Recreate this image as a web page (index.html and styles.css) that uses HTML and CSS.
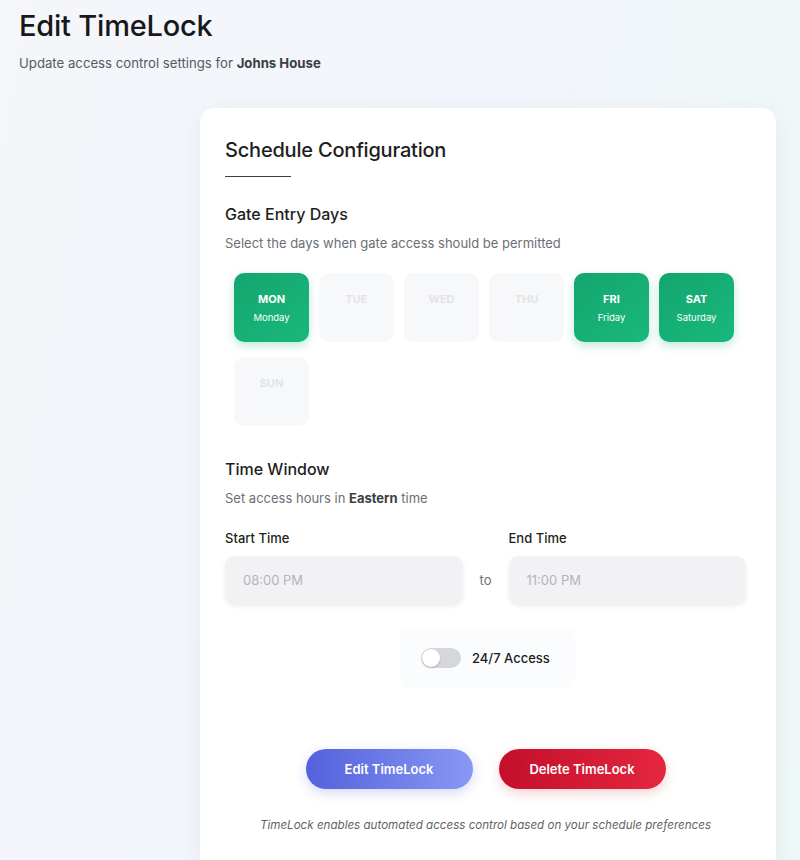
FILE: index.html
```html
<!DOCTYPE html>
<html lang="en">
<head>
<meta charset="utf-8">
<title>Edit TimeLock</title>
<link rel="stylesheet" href="styles.css">
</head>
<body>
<div class="page">
  <header class="page-head">
    <h1 class="title">Edit TimeLock</h1>
    <p class="subtitle">Update access control settings for <strong>Johns House</strong></p>
  </header>
  <main class="layout">
    <section class="card">
      <h2 class="card-title">Schedule Configuration</h2>
      <div class="rule"></div>

      <h3 class="section-title">Gate Entry Days</h3>
      <p class="section-desc">Select the days when gate access should be permitted</p>
      <div class="days">
        <div class="day on"><span class="abbr">MON</span><span class="full">Monday</span></div>
        <div class="day"><span class="abbr">TUE</span><span class="full">Tuesday</span></div>
        <div class="day"><span class="abbr">WED</span><span class="full">Wednesday</span></div>
        <div class="day"><span class="abbr">THU</span><span class="full">Thursday</span></div>
        <div class="day on"><span class="abbr">FRI</span><span class="full">Friday</span></div>
        <div class="day on"><span class="abbr">SAT</span><span class="full">Saturday</span></div>
        <div class="day"><span class="abbr">SUN</span><span class="full">Sunday</span></div>
      </div>

      <h3 class="section-title tw">Time Window</h3>
      <p class="section-desc">Set access hours in <strong>Eastern</strong> time</p>
      <div class="times">
        <div class="field">
          <label class="label">Start Time</label>
          <div class="input">08:00 PM</div>
        </div>
        <span class="to">to</span>
        <div class="field">
          <label class="label">End Time</label>
          <div class="input">11:00 PM</div>
        </div>
      </div>

      <div class="toggle-row">
        <div class="toggle-box">
          <span class="switch"><span class="knob"></span></span>
          <span class="toggle-label">24/7 Access</span>
        </div>
      </div>

      <div class="actions">
        <button class="btn btn-edit">Edit TimeLock</button>
        <button class="btn btn-delete">Delete TimeLock</button>
      </div>
      <p class="footnote">TimeLock enables automated access control based on your schedule preferences</p>
    </section>
  </main>
</div>
</body>
</html>
```
FILE: styles.css
```css
* { box-sizing: border-box; }
html, body { margin: 0; padding: 0; }
body {
  font-family: "Inter", "Roboto", "Liberation Sans", sans-serif;
  color: #1c1c1e;
  background: linear-gradient(100deg, #f4f6fa 0%, #f2f5fb 55%, #eef8f6 100%);
  min-height: 860px;
  overflow: hidden;
}
.page { padding: 9px 0 0 19px; }
.title {
  margin: 0;
  font-size: 29px;
  line-height: 34px;
  font-weight: 500;
  color: #17181a;
  letter-spacing: -0.2px;
}
.subtitle {
  margin: 11px 0 0;
  font-size: 13.2px;
  line-height: 18px;
  color: #555a60;
}
.subtitle strong { color: #3a3d42; font-weight: 700; }

.layout { padding: 36px 24px 0 181px; }
.card {
  background: #fff;
  border-radius: 14px;
  box-shadow: 0 4px 24px rgba(40, 60, 90, 0.06);
  padding: 29px 30px 40px 25px;
  width: 576px;
}
.card-title {
  margin: 0;
  font-size: 20px;
  line-height: 26px;
  font-weight: 500;
  color: #1d1e20;
  letter-spacing: -0.2px;
}
.rule {
  width: 66px;
  height: 1px;
  background: #3d4045;
  margin-top: 13px;
}
.section-title {
  margin: 26px 0 0;
  font-size: 16px;
  line-height: 22px;
  font-weight: 500;
  color: #1d1e20;
}
.section-title.tw { margin-top: 32px; }
.section-desc {
  margin: 9px 0 0;
  font-size: 13px;
  line-height: 18px;
  color: #6b6f75;
}
.section-desc strong { color: #3c3f44; font-weight: 700; }

.days {
  display: grid;
  grid-template-columns: repeat(6, 75px);
  column-gap: 10px;
  row-gap: 15px;
  padding: 0 9px;
  margin-top: 21px;
}
.day {
  height: 69px;
  border-radius: 10px;
  background: #f4f5f7;
  display: flex;
  flex-direction: column;
  align-items: center;
  justify-content: center;
  gap: 6px;
  color: #d3d5d9;
  opacity: 0.65;
}
.day .abbr { font-size: 11px; line-height: 14px; font-weight: 700; }
.day .full { font-size: 9.5px; line-height: 12px; }
.day:not(.on) .full { visibility: hidden; }
.day.on {
  background: linear-gradient(145deg, #13a66f 0%, #19b87c 100%);
  color: #fff;
  opacity: 1;
  box-shadow: 0 4px 10px rgba(16, 170, 110, 0.25);
}

.times {
  display: flex;
  align-items: flex-end;
  margin-top: 22px;
}
.field { flex: 1; display: flex; flex-direction: column; }
.label {
  font-size: 13px;
  line-height: 18px;
  font-weight: 500;
  color: #1d1e20;
}
.input {
  margin-top: 9px;
  height: 48px;
  border-radius: 10px;
  background: #f2f2f4;
  box-shadow: 0 2px 5px rgba(0, 0, 0, 0.08);
  display: flex;
  align-items: center;
  padding-left: 18px;
  font-size: 13px;
  color: #b3b5b9;
}
.to {
  width: 46px;
  text-align: center;
  font-size: 13px;
  color: #6e7176;
  height: 48px;
  line-height: 48px;
}

.toggle-row { display: flex; justify-content: center; margin-top: 24px; padding-left: 4px; }
.toggle-box {
  display: flex;
  align-items: center;
  gap: 11px;
  background: #fbfcfd;
  border-radius: 8px;
  padding: 0 22px 0 21px;
  height: 60px;
  width: 175px;
}
.switch {
  width: 40px;
  height: 20px;
  border-radius: 10px;
  background: #d6d7da;
  position: relative;
  flex-shrink: 0;
}
.knob {
  position: absolute;
  left: 1px;
  top: 1px;
  width: 18px;
  height: 18px;
  border-radius: 50%;
  background: #fff;
  box-shadow: 0 1px 2px rgba(0,0,0,0.2);
}
.toggle-label { font-size: 13px; font-weight: 500; color: #1d1e20; white-space: nowrap; }

.actions {
  display: flex;
  justify-content: center;
  gap: 26px;
  margin-top: 61px;
}
.btn {
  width: 167px;
  height: 40px;
  border: 0;
  border-radius: 20px;
  font-family: inherit;
  font-size: 13px;
  font-weight: 600;
  color: #fff;
}
.btn-edit {
  background: linear-gradient(90deg, #5461dc 0%, #8898f4 100%);
  box-shadow: 0 4px 12px rgba(90, 100, 220, 0.25);
}
.btn-delete {
  background: linear-gradient(90deg, #c40f2a 0%, #e5263f 100%);
  box-shadow: 0 4px 12px rgba(200, 20, 40, 0.2);
}
.footnote {
  margin: 28px 0 0;
  text-align: center;
  font-size: 11.6px;
  line-height: 16px;
  font-style: italic;
  color: #5f6368;
}
```
